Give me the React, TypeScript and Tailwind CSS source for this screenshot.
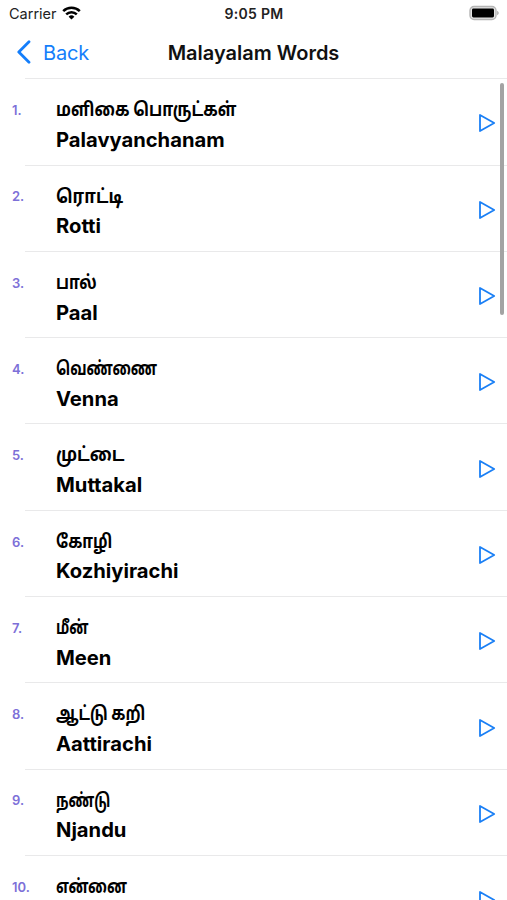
type Word = {
  tamil: string;
  malayalam?: string;
  fit: string;
};

const words: Word[] = [
  { tamil: "மளிகை பொருட்கள்", malayalam: "Palavyanchanam", fit: "scale-x-[0.837]" },
  { tamil: "ரொட்டி", malayalam: "Rotti", fit: "scale-x-[0.885]" },
  { tamil: "பால்", malayalam: "Paal", fit: "scale-x-[0.82]" },
  { tamil: "வெண்ணை", malayalam: "Venna", fit: "scale-x-[0.755]" },
  { tamil: "முட்டை", malayalam: "Muttakal", fit: "scale-x-[0.9]" },
  { tamil: "கோழி", malayalam: "Kozhiyirachi", fit: "scale-x-[0.815]" },
  { tamil: "மீன்", malayalam: "Meen", fit: "scale-x-[0.745]" },
  { tamil: "ஆட்டு கறி", malayalam: "Aattirachi", fit: "scale-x-[0.815]" },
  { tamil: "நண்டு", malayalam: "Njandu", fit: "scale-x-[0.74]" },
  { tamil: "என்னை", fit: "scale-x-[0.775]" },
];

function StatusBar() {
  return (
    <div className="grid h-[27px] shrink-0 grid-cols-3 items-center pl-[9px] pr-[8px]">
      <div className="flex items-center gap-[6px]">
        <span className="pt-px text-[14.5px] leading-none text-[#222]">Carrier</span>
        <svg
          className="-ml-px -mt-[2px]"
          width="19"
          height="14"
          viewBox="0 0 19 14"
          fill="none"
          stroke="#000"
          strokeWidth="2.5"
        >
          <path d="M1.2 5.2a11.8 11.8 0 0 1 16.6 0" />
          <path d="M4.2 8.4a7.5 7.5 0 0 1 10.6 0" />
          <path d="M9.5 13.6 6.6 10.7a4.1 4.1 0 0 1 5.8 0Z" fill="#000" stroke="none" />
        </svg>
      </div>
      <span className="text-center text-[14px] font-semibold leading-none tracking-[0.3px] text-[#222]">
        9:05 PM
      </span>
      <svg className="-mt-px justify-self-end" width="31" height="16" viewBox="0 0 31 16">
        <rect x="2" y="1.5" width="26" height="13" rx="4" fill="#e4e4e4" stroke="#b5b5b5" strokeWidth="1.4" />
        <rect x="4" y="3.5" width="22" height="9" rx="1.4" fill="#000" />
        <path d="M29.2 5.8c1.9.9 1.9 3.5 0 4.4Z" fill="#a8a8a8" />
      </svg>
    </div>
  );
}

function NavBar() {
  return (
    <div className="grid h-[51.3px] shrink-0 grid-cols-[1fr_auto_1fr] items-center">
      <button className="flex items-center gap-[12px] pl-[16px] text-[#147efb]">
        <svg
          className="-mt-[2px]"
          width="15"
          height="24"
          viewBox="0 0 15 24"
          fill="none"
          stroke="currentColor"
          strokeWidth="2.8"
        >
          <path d="M13 1.8 2.8 12 13 22.2" strokeLinecap="round" strokeLinejoin="round" />
        </svg>
        <span className="text-[20px] leading-none tracking-[-0.2px]">Back</span>
      </button>
      <h1 className="text-[20px] font-semibold leading-none text-[#111]">Malayalam Words</h1>
    </div>
  );
}

function WordRow({ word, index }: { word: Word; index: number }) {
  return (
    <li className="flex h-[86.3px]">
      <span className="w-[56px] shrink-0 pl-[12px] pt-[23.8px] text-[13px] font-semibold leading-[16px] text-[#7d70d8]">
        {index}.
      </span>
      <div className="flex-1 whitespace-nowrap text-black">
        <p className={`mt-[17px] h-[29.7px] w-max origin-left text-[19px] font-bold leading-[30px] ${word.fit}`}>
          {word.tamil}
        </p>
        {word.malayalam && (
          <p className="h-[30px] text-[20.2px] font-bold leading-[30px]">{word.malayalam}</p>
        )}
      </div>
      <svg
        className="mr-[11px] mt-[35.2px]"
        width="18"
        height="20"
        viewBox="0 0 18 20"
        fill="none"
        stroke="#1a7ff5"
        strokeWidth="1.8"
        strokeLinejoin="round"
      >
        <path d="M2 2v16L16.2 10Z" />
      </svg>
    </li>
  );
}

export default function App() {
  return (
    <div className="relative flex h-[900px] w-[507px] flex-col overflow-hidden bg-white font-['Inter','Noto_Sans_Tamil','Noto_Sans',sans-serif]">
      <StatusBar />
      <NavBar />
      <ul className="flex min-h-0 flex-1 flex-col overflow-hidden">
        {words.map((word, i) => (
          <div key={word.tamil} className="shrink-0">
            <div className="-mb-px ml-[25px] h-px bg-[#e9e9ea]" />
            <WordRow word={word} index={i + 1} />
          </div>
        ))}
      </ul>
      <div className="absolute right-[3px] top-[83px] h-[232px] w-[4px] rounded-full bg-[#a3a3a3]" />
    </div>
  );
}
